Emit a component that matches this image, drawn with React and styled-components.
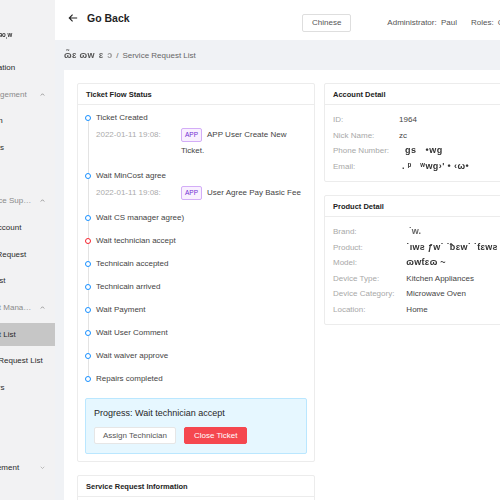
import React from "react";
import styled, { createGlobalStyle } from "styled-components";

const Global = createGlobalStyle`
  html, body { margin: 0; padding: 0; }
  body {
    width: 500px;
    height: 500px;
    overflow: hidden;
    font-family: "Liberation Sans", Arial, sans-serif;
    color: #333;
    background: #f0f2f5;
  }
  * { box-sizing: border-box; }
`;

const Layout = styled.div`
  display: flex;
  width: 500px;
  height: 500px;
`;

const Sidebar = styled.aside`
  flex: 0 0 55px;
  overflow: hidden;
  background: #f2f2f3;
`;

const SideInner = styled.div`
  width: 155px;
  margin-left: -100px;
`;

const Logo = styled.div`
  height: 54px;
  padding: 31px 0 0 99px;
  font-size: 9px;
  font-weight: 700;
  color: #333;
  filter: blur(0.7px);
  letter-spacing: -0.5px;
  white-space: nowrap;
`;

const MenuRow = styled.div`
  display: flex;
  align-items: center;
  gap: 6px;
  height: 26.7px;
  padding: 0 10px 0 80px;
  font-size: 8px;
  white-space: nowrap;
  color: ${({ $muted }) => ($muted ? "#8a8a8a" : "#2a2a2a")};
  background: ${({ $active }) => ($active ? "#c6c6c6" : "transparent")};
  border-top: ${({ $active }) => ($active ? "2px solid #f2f2f3" : "0")};
  border-bottom: ${({ $active }) => ($active ? "2px solid #f2f2f3" : "0")};
`;

const MenuLabel = styled.span`
  flex: ${({ $group }) => ($group ? 1 : "none")};
  min-width: 0;
  overflow: ${({ $group }) => ($group ? "hidden" : "visible")};
  text-overflow: ellipsis;
`;

const Chevron = styled.svg`
  flex: 0 0 5px;
  width: 5px;
  height: 5px;
`;

const Main = styled.div`
  flex: 1;
  min-width: 0;
  display: flex;
  flex-direction: column;
  overflow: hidden;
`;

const Header = styled.header`
  flex: 0 0 40px;
  display: flex;
  align-items: center;
  background: #fff;
  white-space: nowrap;
`;

const BackGroup = styled.div`
  flex: 0 0 247px;
  display: flex;
  align-items: center;
  gap: 9px;
  padding-left: 13px;
  margin-bottom: 5px;
  font-size: 10.5px;
  font-weight: 700;
  color: #1f1f1f;
`;

const LangButton = styled.button`
  height: 18px;
  padding: 0 9px;
  margin-top: 5px;
  border: 1px solid #dedede;
  border-radius: 2px;
  background: #fff;
  font: inherit;
  font-size: 8px;
  color: #555;
`;

const HeaderText = styled.span`
  margin-top: 5px;
  margin-left: ${({ $gap }) => $gap}px;
  font-size: 8px;
  color: #555;
  word-spacing: 2px;
`;

const Crumbs = styled.div`
  flex: 0 0 30px;
  display: flex;
  align-items: center;
  gap: 4px;
  padding-left: 9px;
  font-size: 8px;
  color: #666;
  white-space: nowrap;
`;

const Blur = styled.span`
  display: inline-block;
  filter: blur(${({ $b }) => $b ?? 0.7}px);
  color: ${({ $c }) => $c || "#333"};
  letter-spacing: ${({ $ls }) => $ls ?? 0}px;
  font-size: ${({ $fs }) => $fs ?? 8}px;
  font-weight: 900;
  white-space: pre;
`;

const Body = styled.div`
  flex: 1;
  padding-left: 9px;
`;

const Panel = styled.div`
  height: 100%;
  background: #fff;
  padding: 13px;
  display: flex;
  gap: 9px;
  align-items: flex-start;
`;

const Column = styled.div`
  flex: 0 0 ${({ $w }) => $w}px;
  display: flex;
  flex-direction: column;
  gap: ${({ $gap }) => $gap}px;
`;

const Card = styled.section`
  border: 1px solid #ececec;
  border-radius: 2px;
  background: #fff;
`;

const CardHead = styled.div`
  height: 21px;
  display: flex;
  align-items: center;
  padding: 0 8px;
  border-bottom: 1px solid #ececec;
  font-size: 7.5px;
  font-weight: 700;
  color: #222;
  white-space: nowrap;
`;

const CardBody = styled.div`
  padding: 7px 7px ${({ $pb }) => $pb ?? 7}px;
`;

const Timeline = styled.ul`
  list-style: none;
  margin: 0;
  padding: 0;
`;

const Item = styled.li`
  position: relative;
  padding: 0 0 11px 11px;
  font-size: 8px;
  color: #444;

  &::before {
    content: "";
    position: absolute;
    left: 2.5px;
    top: 9px;
    bottom: -3px;
    width: 1px;
    background: #e3e3e3;
    display: ${({ $last }) => ($last ? "none" : "block")};
  }
`;

const Dot = styled.span`
  position: absolute;
  left: 0;
  top: 3px;
  width: 6px;
  height: 6px;
  border-radius: 50%;
  background: #fff;
  border: 1.5px solid ${({ $red }) => ($red ? "#f5222d" : "#1890ff")};
`;

const ItemTitle = styled.div`
  line-height: 12px;
`;

const Sub = styled.div`
  display: flex;
  margin-top: 3px;
  line-height: 16px;
`;

const SubDate = styled.span`
  flex: 0 0 85px;
  color: #ababab;
`;

const SubText = styled.span`
  flex: 1;
  padding-right: 3px;
  color: #444;
`;

const Tag = styled.span`
  display: inline-block;
  height: 14px;
  line-height: 12px;
  padding: 0 3px;
  margin-right: 5px;
  border: 1px solid #d3adf7;
  border-radius: 2px;
  background: #f9f0ff;
  color: #722ed1;
  font-size: 6.5px;
  vertical-align: top;
  margin-top: 1px;
`;

const Progress = styled.div`
  margin-top: 2px;
  padding: 8px 8px 9px;
  border: 1px solid #bae7ff;
  border-radius: 2px;
  background: #e6f7ff;
`;

const ProgressTitle = styled.div`
  font-size: 9px;
  line-height: 12px;
  color: #262626;
`;

const Actions = styled.div`
  display: flex;
  gap: 8px;
  margin-top: 8px;
`;

const Btn = styled.button`
  height: 17px;
  padding: 0 ${({ $pad }) => $pad}px;
  border-radius: 2px;
  font: inherit;
  font-size: 8px;
  border: 1px solid ${({ $danger }) => ($danger ? "#f5474f" : "#e6e6e6")};
  background: ${({ $danger }) => ($danger ? "#f5474f" : "#fff")};
  color: ${({ $danger }) => ($danger ? "#fff" : "#555")};
`;

const Details = styled.dl`
  display: grid;
  grid-template-columns: max-content 1fr;
  column-gap: ${({ $gap }) => $gap}px;
  margin: 0;
  padding: 0 1px;
  font-size: 8px;
  line-height: 15.5px;
  white-space: nowrap;
`;

const Term = styled.dt`
  color: #a8a8a8;
`;

const Value = styled.dd`
  margin: 0;
  color: #444;
`;

const Up = () => (
  <Chevron viewBox="0 0 10 10">
    <path d="M1.5 7 L5 3.5 L8.5 7" fill="none" stroke="#777" strokeWidth="1.4" />
  </Chevron>
);

const Down = () => (
  <Chevron viewBox="0 0 10 10">
    <path d="M1.5 3.5 L5 7 L8.5 3.5" fill="none" stroke="#999" strokeWidth="1.2" />
  </Chevron>
);

const menu = [
  { label: "Operation" },
  { label: "Management", muted: true, open: true },
  { label: "Admin" },
  { label: "Menus" },
  { label: "Logs" },
  { label: "Service Support", muted: true, open: true },
  { label: "My Account" },
  { label: "Add Request" },
  { label: "Waitlist" },
  { label: "Ticket Management", muted: true, open: true },
  { label: "Ticket List", active: true },
  { label: "New Request List" },
  { label: "Orders" },
  { label: "Tags" },
  { label: "FAQ" },
  { label: "Agreement", closed: true },
];

const flow = [
  {
    title: "Ticket Created",
    sub: { date: "2022-01-11 19:08:", text: "APP User Create New Ticket." },
  },
  {
    title: "Wait MinCost agree",
    sub: { date: "2022-01-11 19:08:", text: "User Agree Pay Basic Fee" },
  },
  { title: "Wait CS manager agree)" },
  { title: "Wait technician accept", red: true },
  { title: "Technicain accepted" },
  { title: "Technicain arrived" },
  { title: "Wait Payment" },
  { title: "Wait User Comment" },
  { title: "Wait waiver approve" },
  { title: "Repairs completed" },
];

const account = [
  ["ID:", "1964"],
  ["Nick Name:", "zc"],
  ["Phone Number:", <Blur key="p" $ls={0.5} $fs={9}>{"  gs   •wg"}</Blur>],
  ["Email:", <Blur key="e" $ls={0.4} $fs={9}>{" . ᵖ   ʷwg›' • ‹ω•"}</Blur>],
];

const product = [
  ["Brand:", <Blur key="b" $c="#666" $fs={9}>{" ˙w."}</Blur>],
  ["Product:", <Blur key="pr" $ls={0.3} $fs={9}>{"˙ıwƨ ƒw˙ ˙ƀɛw˙ ˙ƭɛwƨ"}</Blur>],
  ["Model:", <Blur key="m" $ls={0.3} $fs={9}>{"ɷwƭɛɷ ~"}</Blur>],
  ["Device Type:", "Kitchen Appliances"],
  ["Device Category:", "Microwave Oven"],
  ["Location:", "Home"],
];

export default function App() {
  return (
    <>
      <Global />
      <Layout>
        <Sidebar>
          <SideInner>
            <Logo>ᵊᵒ˒ʷ</Logo>
            {menu.map((m) => (
              <MenuRow key={m.label} $muted={m.muted} $active={m.active}>
                <MenuLabel $group={m.open || m.closed}>{m.label}</MenuLabel>
                {m.open && <Up />}
                {m.closed && <Down />}
              </MenuRow>
            ))}
          </SideInner>
        </Sidebar>

        <Main>
          <Header>
            <BackGroup>
              <svg width="10" height="10" viewBox="0 0 12 12">
                <path
                  d="M11 6 H1.5 M5.5 2 L1.5 6 L5.5 10"
                  fill="none"
                  stroke="#222"
                  strokeWidth="1.3"
                />
              </svg>
              Go Back
            </BackGroup>
            <LangButton>Chinese</LangButton>
            <HeaderText $gap={36}>Administrator: Paul</HeaderText>
            <HeaderText $gap={14}>Roles: General Admin</HeaderText>
          </Header>

          <Crumbs>
            <Blur $c="#555" $ls={0.3} $fs={9}>{"ɷ̃ɛ ɷw"}</Blur>
            <Blur $c="#666" $fs={9}>ɛ</Blur>
            <Blur $c="#999" $fs={9}>ɔ</Blur>
            <span>/</span>
            <span>Service Request List</span>
          </Crumbs>

          <Body>
            <Panel>
              <Column $w={238} $gap={13}>
                <Card>
                  <CardHead>Ticket Flow Status</CardHead>
                  <CardBody>
                    <Timeline>
                      {flow.map((f, i) => (
                        <Item key={f.title} $last={i === flow.length - 1}>
                          <Dot $red={f.red} />
                          <ItemTitle>{f.title}</ItemTitle>
                          {f.sub && (
                            <Sub>
                              <SubDate>{f.sub.date}</SubDate>
                              <SubText>
                                <Tag>APP</Tag>
                                {f.sub.text}
                              </SubText>
                            </Sub>
                          )}
                        </Item>
                      ))}
                    </Timeline>
                    <Progress>
                      <ProgressTitle>Progress: Wait technician accept</ProgressTitle>
                      <Actions>
                        <Btn $pad={8}>Assign Technician</Btn>
                        <Btn $pad={9} $danger>Close Ticket</Btn>
                      </Actions>
                    </Progress>
                  </CardBody>
                </Card>
                <Card>
                  <CardHead>Service Request Information</CardHead>
                  <CardBody />
                </Card>
              </Column>

              <Column $w={260} $gap={13}>
                <Card>
                  <CardHead>Account Detail</CardHead>
                  <CardBody>
                    <Details $gap={10}>
                      {account.map(([k, v]) => (
                        <React.Fragment key={k}>
                          <Term>{k}</Term>
                          <Value>{v}</Value>
                        </React.Fragment>
                      ))}
                    </Details>
                  </CardBody>
                </Card>
                <Card>
                  <CardHead>Product Detail</CardHead>
                  <CardBody>
                    <Details $gap={12}>
                      {product.map(([k, v]) => (
                        <React.Fragment key={k}>
                          <Term>{k}</Term>
                          <Value>{v}</Value>
                        </React.Fragment>
                      ))}
                    </Details>
                  </CardBody>
                </Card>
              </Column>
            </Panel>
          </Body>
        </Main>
      </Layout>
    </>
  );
}
